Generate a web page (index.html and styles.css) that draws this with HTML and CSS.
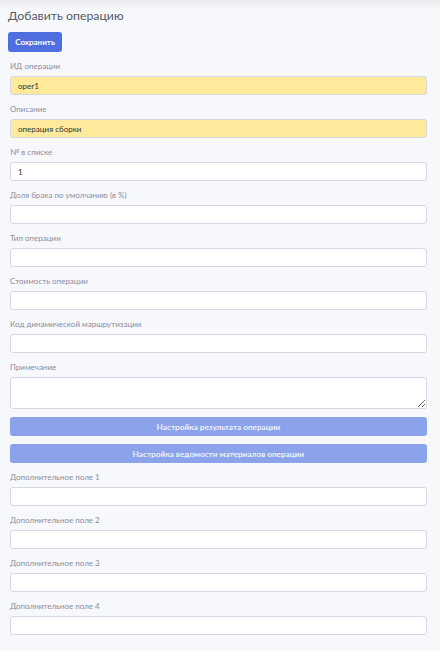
FILE: index.html
```html
<!DOCTYPE html>
<html lang="ru">
<head>
<meta charset="utf-8">
<link rel="stylesheet" href="styles.css">
</head>
<body>
<div class="page">
  <h1 class="title">Добавить операцию</h1>
  <button class="btn-save">Сохранить</button>
  <form class="form">
    <label class="lbl">ИД операции</label>
    <input class="inp inp-hl" value="oper1">
    <label class="lbl">Описание</label>
    <input class="inp inp-hl" value="операция сборки">
    <label class="lbl">№ в списке</label>
    <input class="inp" value="1">
    <label class="lbl">Доля брака по умолчанию (в %)</label>
    <input class="inp">
    <label class="lbl">Тип операции</label>
    <input class="inp">
    <label class="lbl">Стоимость операции</label>
    <input class="inp">
    <label class="lbl">Код динамической маршрутизации</label>
    <input class="inp">
    <label class="lbl">Примечание</label>
    <textarea class="inp txt"></textarea>
    <button type="button" class="btn-wide">Настройка результата операции</button>
    <button type="button" class="btn-wide btn-last">Настройка ведомости материалов операции</button>
    <label class="lbl">Дополнительное поле 1</label>
    <input class="inp">
    <label class="lbl">Дополнительное поле 2</label>
    <input class="inp">
    <label class="lbl">Дополнительное поле 3</label>
    <input class="inp">
    <label class="lbl">Дополнительное поле 4</label>
    <input class="inp">
  </form>
</div>
</body>
</html>
```
FILE: styles.css
```css
html, body {
  margin: 0;
  padding: 0;
  background: #f7f8fc;
}
.page {
  min-height: 651px;
  background: linear-gradient(#eaeaee 0px, #f7f8fc 9px) no-repeat;
  padding: 8px 13px 0 8px;
  font-family: Lato, "Noto Sans", sans-serif;
  box-sizing: border-box;
}
.title {
  margin: 0;
  font-size: 12.3px;
  line-height: 16px;
  font-weight: 400;
  color: #555a66;
}
.btn-save {
  margin-top: 8px;
  display: block;
  height: 20px;
  width: 54px;
  padding: 0;
  border: none;
  border-radius: 3px;
  background: #4f6fe1;
  color: #fff;
  font-family: inherit;
  font-size: 8px;
  font-weight: 700;
}
.form {
  display: flex;
  flex-direction: column;
  margin: 9px 0 0 2px;
}
.lbl {
  display: block;
  font-size: 8px;
  line-height: 10px;
  color: #8c8c9c;
  margin-bottom: 5px;
}
.inp {
  display: block;
  box-sizing: border-box;
  height: 19px;
  width: 100%;
  margin: 0 0 9px 0;
  padding: 0 7px;
  border: 1px solid #d6d6e6;
  border-radius: 3px;
  background: #fff;
  font-family: inherit;
  font-size: 8px;
  color: #333;
  outline: none;
}
.inp-hl {
  background: #ffe99a;
}
.txt {
  height: 32px;
  margin-bottom: 8px;
  resize: vertical;
}
.btn-wide {
  display: block;
  height: 19px;
  width: 100%;
  margin: 0 0 8px 0;
  padding: 0;
  border: none;
  border-radius: 3px;
  background: #8aa3eb;
  color: #eef1fc;
  font-family: inherit;
  font-size: 8.2px;
  font-weight: 700;
}
.btn-last {
  margin-bottom: 9px;
}
```
